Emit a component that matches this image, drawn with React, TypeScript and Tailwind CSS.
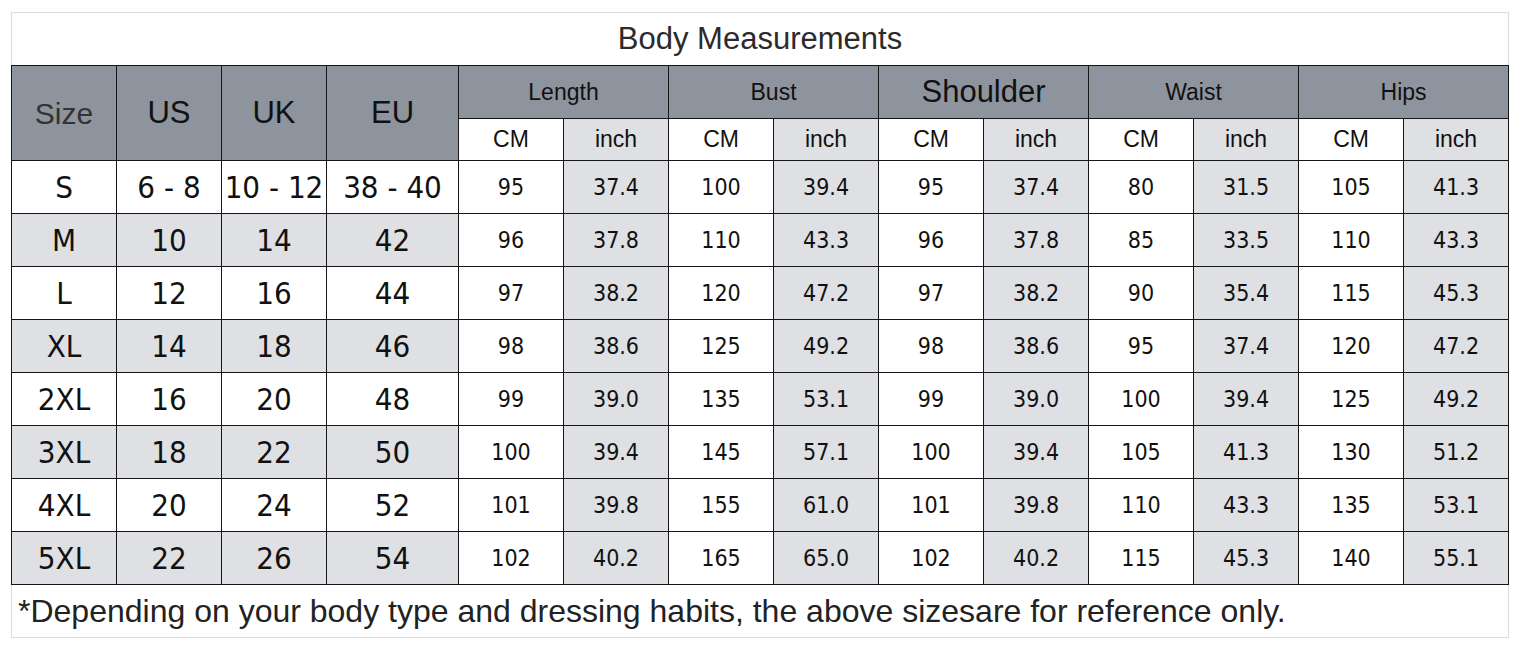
const rows = [
  ["S", "6 - 8", "10 - 12", "38 - 40", "95", "37.4", "100", "39.4", "95", "37.4", "80", "31.5", "105", "41.3"],
  ["M", "10", "14", "42", "96", "37.8", "110", "43.3", "96", "37.8", "85", "33.5", "110", "43.3"],
  ["L", "12", "16", "44", "97", "38.2", "120", "47.2", "97", "38.2", "90", "35.4", "115", "45.3"],
  ["XL", "14", "18", "46", "98", "38.6", "125", "49.2", "98", "38.6", "95", "37.4", "120", "47.2"],
  ["2XL", "16", "20", "48", "99", "39.0", "135", "53.1", "99", "39.0", "100", "39.4", "125", "49.2"],
  ["3XL", "18", "22", "50", "100", "39.4", "145", "57.1", "100", "39.4", "105", "41.3", "130", "51.2"],
  ["4XL", "20", "24", "52", "101", "39.8", "155", "61.0", "101", "39.8", "110", "43.3", "135", "53.1"],
  ["5XL", "22", "26", "54", "102", "40.2", "165", "65.0", "102", "40.2", "115", "45.3", "140", "55.1"],
];

const groups = [
  { name: "Length", big: false },
  { name: "Bust", big: false },
  { name: "Shoulder", big: true },
  { name: "Waist", big: false },
  { name: "Hips", big: false },
];

const cell = "border border-[#161616] text-center align-middle p-0";
const tahoma = "font-['DejaVu_Sans_Condensed','DejaVu_Sans',sans-serif] font-stretch-condensed";
const arial = "font-['Liberation_Sans',Arial,sans-serif]";

export default function App() {
  return (
    <div className="min-h-[650px] bg-white pl-[11px] pt-[12px]">
      <div className="w-[1498px] border border-[#dcdcdc]">
        {/* title */}
        <div className={`${arial} flex h-[52px] items-center justify-center text-[31px] text-[#2b2b2b]`}>
          Body Measurements
        </div>

        <table className="w-[1498px] table-fixed border-collapse -ml-px">
          <colgroup>
            <col className="w-[105px]" />
            <col className="w-[105px]" />
            <col className="w-[105px]" />
            <col className="w-[132px]" />
            {Array.from({ length: 10 }).map((_, i) => (
              <col key={i} className="w-[105px]" />
            ))}
          </colgroup>
          <thead>
            <tr className="h-[53px]">
              <th rowSpan={2} className={`${cell} ${arial} bg-[#8e949d] text-[30px] font-normal text-[#333]`}>Size</th>
              <th rowSpan={2} className={`${cell} ${arial} bg-[#8e949d] text-[31px] font-normal text-[#111]`}>US</th>
              <th rowSpan={2} className={`${cell} ${arial} bg-[#8e949d] text-[31px] font-normal text-[#111]`}>UK</th>
              <th rowSpan={2} className={`${cell} ${arial} bg-[#8e949d] text-[31px] font-normal text-[#111]`}>EU</th>
              {groups.map((g) => (
                <th
                  key={g.name}
                  colSpan={2}
                  className={`${cell} ${arial} bg-[#8e949d] font-normal text-[#111] ${g.big ? "text-[31px]" : "text-[23px]"}`}
                >
                  {g.name}
                </th>
              ))}
            </tr>
            <tr className="h-[42px]">
              {groups.map((g) => (
                <>
                  <th key={g.name + "cm"} className={`${cell} ${arial} bg-white text-[23px] font-normal text-[#111]`}>CM</th>
                  <th key={g.name + "in"} className={`${cell} ${arial} bg-[#dfe0e4] text-[23px] font-normal text-[#111]`}>inch</th>
                </>
              ))}
            </tr>
          </thead>
          <tbody>
            {rows.map((r, ri) => (
              <tr key={r[0]} className="h-[53px]">
                {r.map((v, ci) => {
                  const head = ci < 4;
                  const shade = head ? ri % 2 === 1 : ci % 2 === 1;
                  return (
                    <td
                      key={ci}
                      className={`${cell} ${tahoma} text-[#111] ${head ? "text-[31px]" : "text-[23px]"} ${shade ? "bg-[#dfe0e4]" : "bg-white"}`}
                    >
                      {v}
                    </td>
                  );
                })}
              </tr>
            ))}
          </tbody>
        </table>

        {/* note */}
        <div className={`${arial} flex h-[52px] items-center pl-[6px] text-[32px] text-[#222]`}>
          *Depending on your body type and dressing habits, the above sizesare for reference only.
        </div>
      </div>
    </div>
  );
}
